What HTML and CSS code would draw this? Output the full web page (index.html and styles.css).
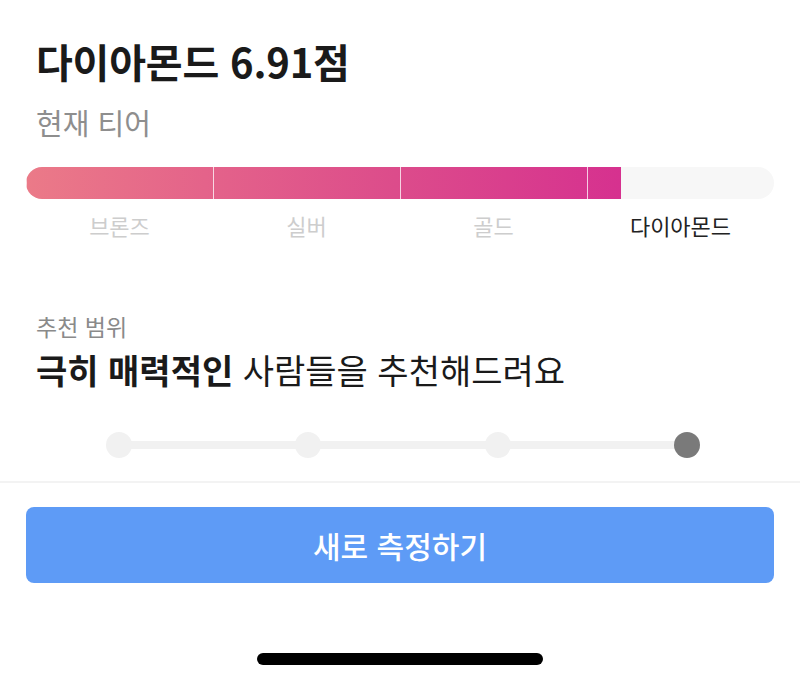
FILE: index.html
```html
<!DOCTYPE html>
<html lang="ko">
<head>
<meta charset="utf-8">
<title>티어</title>
<link rel="stylesheet" href="styles.css">
</head>
<body>
<main class="screen">
  <section class="tier">
    <h1 class="title">다이아몬드 6.91점</h1>
    <p class="subtitle">현재 티어</p>
    <div class="bar">
      <div class="bar-fill" style="width: 79.5%"></div>
    </div>
    <div class="labels">
      <span class="label">브론즈</span>
      <span class="label">실버</span>
      <span class="label">골드</span>
      <span class="label active">다이아몬드</span>
    </div>
  </section>

  <section class="range">
    <p class="range-caption">추천 범위</p>
    <p class="range-text"><strong>극히 매력적인</strong> 사람들을 추천해드려요</p>
    <div class="slider">
      <span class="dot"></span>
      <span class="dot"></span>
      <span class="dot"></span>
      <span class="dot on"></span>
    </div>
  </section>

  <hr class="divider">

  <div class="actions">
    <button class="cta" type="button">새로 측정하기</button>
  </div>

  <div class="home-bar"></div>
</main>
</body>
</html>
```

FILE: styles.css
```css
* { box-sizing: border-box; }

html, body {
  margin: 0;
  padding: 0;
  background: #ffffff;
}

body {
  font-family: "Noto Sans CJK KR", "Noto Sans", sans-serif;
  color: #1a1a1a;
}

.screen {
  width: 800px;
  height: 682px;
  display: flex;
  flex-direction: column;
  overflow: hidden;
}

.tier {
  padding: 36px 26px 0;
}

.title {
  margin: 0;
  padding-left: 10px;
  font-size: 40px;
  line-height: 50px;
  font-weight: 700;
  color: #1a1a1a;
  letter-spacing: -0.2px;
}

.subtitle {
  margin: 18px 0 0;
  padding-left: 10px;
  font-size: 29px;
  line-height: 36px;
  font-weight: 400;
  color: #8e8e8e;
}

.bar {
  margin-top: 27px;
  height: 32px;
  border-radius: 16px;
  background: #f7f7f7;
  overflow: hidden;
  position: relative;
  display: flex;
}

.bar-fill {
  height: 100%;
  background: linear-gradient(90deg, #eb7a88 0%, #e4638a 30%, #dc4c8b 62%, #d6318f 100%);
}

.bar::after {
  content: "";
  position: absolute;
  inset: 0;
  background-image: linear-gradient(90deg, transparent calc(100% - 1px), rgba(255, 255, 255, 0.75) calc(100% - 1px));
  background-size: 25% 100%;
  background-repeat: repeat-x;
  background-position: 1px 0;
  pointer-events: none;
}

.labels {
  margin-top: 12px;
  display: grid;
  grid-template-columns: repeat(4, 1fr);
}

.label {
  text-align: center;
  font-size: 22px;
  line-height: 28px;
  color: #cdcdcd;
}

.label.active {
  color: #222222;
}

.range {
  padding: 72px 36px 0;
}

.range-caption {
  margin: 0;
  font-size: 23px;
  line-height: 30px;
  color: #8a8a8a;
}

.range-text {
  margin: 7px 0 0;
  font-size: 34px;
  line-height: 44px;
  color: #1a1a1a;
  font-weight: 400;
}

.range-text strong {
  font-weight: 700;
}

.slider {
  margin: 40px 64px 0 70px;
  height: 26px;
  display: flex;
  justify-content: space-between;
  align-items: center;
  background: linear-gradient(#f1f1f1, #f1f1f1) center / calc(100% - 26px) 8px no-repeat;
}

.dot {
  width: 26px;
  height: 26px;
  border-radius: 50%;
  background: #f1f1f1;
}

.dot.on {
  background: #7a7a7a;
}

.divider {
  margin: 23px 0 0;
  border: 0;
  height: 2px;
  background: #f3f3f3;
}

.actions {
  padding: 24px 26px 0;
}

.cta {
  width: 100%;
  height: 76px;
  border: 0;
  border-radius: 8px;
  background: #5e9bf6;
  color: #ffffff;
  font-family: "Noto Sans CJK KR", "Noto Sans", sans-serif;
  font-size: 30px;
  font-weight: 500;
  line-height: 76px;
  padding: 0;
}

.home-bar {
  margin: 70px auto 0;
  width: 286px;
  height: 12px;
  border-radius: 6px;
  background: #000000;
}
```
